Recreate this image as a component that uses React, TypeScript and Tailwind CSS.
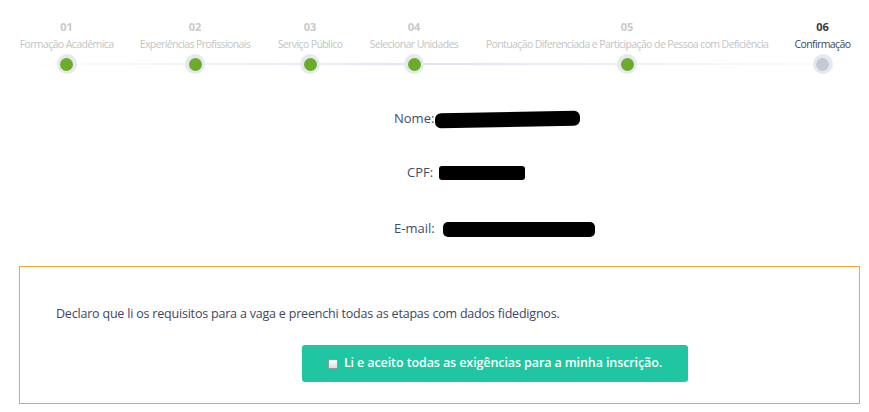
import React from "react";

const steps = [
  { n: "01", label: "Formação Acadêmica", w: "w-[119px]", done: true },
  { n: "02", label: "Experiências Profissionais", w: "w-[138px]", done: true },
  { n: "03", label: "Serviço Público", w: "w-[92px]", done: true },
  { n: "04", label: "Selecionar Unidades", w: "w-[116px]", done: true },
  { n: "05", label: "Pontuação Diferenciada e Participação de Pessoa com Deficiência", w: "w-[310px]", done: true },
  { n: "06", label: "Confirmação", w: "w-[81px]", done: false },
];

export default function App() {
  return (
    <div className="w-[869px] h-[412px] bg-white overflow-hidden" style={{ fontFamily: '"Open Sans", "Noto Sans", sans-serif' }}>
      {/* Stepper */}
      <div className="relative pl-[7px] pt-[19px]">
        <div className="absolute left-[8px] right-[7px] top-[63px] h-[2px] bg-gradient-to-r from-[#ffffff] via-[#e0e4ee] to-[#ffffff]" />
        <div className="relative flex">
          {steps.map((s) => (
            <div key={s.n} className={`${s.w} flex flex-col items-center`}>
              <div className={`text-[11px] leading-[16px] font-bold ${s.done ? "text-[#c9c9c9]" : "text-[#3a3a3a]"}`}>{s.n}</div>
              <div className={`text-[10.5px] leading-[16px] mt-[1px] tracking-[-0.6px] whitespace-nowrap ${s.done ? "text-[#c4c4c4]" : "text-[#3d4a60]"}`}>{s.label}</div>
              <div className="mt-[2px] w-[20px] h-[20px] rounded-full bg-[#e5e8f0] flex items-center justify-center">
                <div className={`w-[13px] h-[13px] rounded-full ${s.done ? "bg-[#6dac2b]" : "bg-[#c4c9d6]"}`} />
              </div>
            </div>
          ))}
        </div>
      </div>

      {/* Info */}
      <div className="text-[13px] text-[#3e4d6e]">
        <div className="flex items-center h-[20px] mt-[35px] ml-[394px]">
          <span>Nome:</span>
          <div className="ml-[1px] w-[145px] h-[15px] bg-black rounded-[6px] -skew-y-1" />
        </div>
        <div className="flex items-center h-[20px] mt-[34px] ml-[407px]">
          <span>CPF:</span>
          <div className="ml-[6px] w-[86px] h-[14px] bg-black rounded-[3px]" />
        </div>
        <div className="flex items-center h-[20px] mt-[36px] ml-[394px]">
          <span>E-mail:</span>
          <div className="ml-[8px] w-[152px] h-[15px] bg-black rounded-[5px]" />
        </div>
      </div>

      {/* Declaration box */}
      <div className="mt-[27px] ml-[19px] w-[841px] h-[138px] border border-[#f0a82c]">
        <p className="mt-[38px] ml-[36px] text-[12.5px] tracking-[-0.2px] text-[#3e4660] leading-[18px]">
          Declaro que li os requisitos para a vaga e preenchi todas as etapas com dados fidedignos.
        </p>
        <div className="mt-[22px] ml-[282px] w-[386px] h-[37px] bg-[#20c6a1] rounded-[3px] flex items-center justify-center gap-[6px] text-white text-[12.5px] tracking-[-0.1px] font-semibold">
          <span className="w-[10px] h-[10px] bg-gradient-to-b from-[#ffffff] to-[#dcdcdc] border border-[#8f9b98] rounded-[1px]" />
          <span>Li e aceito todas as exigências para a minha inscrição.</span>
        </div>
      </div>
    </div>
  );
}
